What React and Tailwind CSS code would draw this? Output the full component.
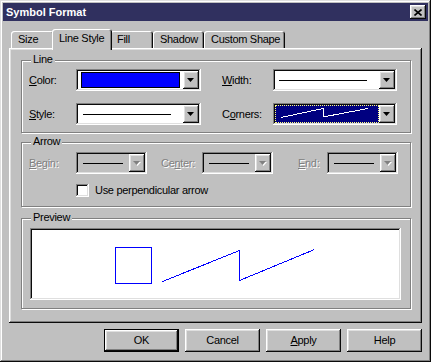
const raised =
  "shadow-[inset_-1px_-1px_#0a0a0a,inset_1px_1px_#ffffff,inset_-2px_-2px_#808080,inset_2px_2px_#dfdfdf]";
const sunken =
  "shadow-[inset_-1px_-1px_#ffffff,inset_1px_1px_#808080,inset_-2px_-2px_#dfdfdf,inset_2px_2px_#0a0a0a]";
const dim = "text-[#808080] [text-shadow:1px_1px_0_#ffffff]";

function DropButton({ disabled }) {
  return (
    <div className={`flex h-full w-[16px] shrink-0 items-center justify-center bg-[#c0c0c0] ${raised}`}>
      <svg width="8" height="5" viewBox="0 0 8 5">
        {disabled && <path d="M1 1h7L4.5 5z" fill="#ffffff" />}
        <path d="M0 0h7L3.5 4z" fill={disabled ? "#808080" : "#000000"} />
      </svg>
    </div>
  );
}

function Combo({ className, disabled, children }) {
  return (
    <div className={`flex h-[22px] shrink-0 p-[2px] ${disabled ? "bg-[#c0c0c0]" : "bg-white"} ${sunken} ${className}`}>
      <div className="flex min-w-0 flex-1 items-center">{children}</div>
      <DropButton disabled={disabled} />
    </div>
  );
}

function Group({ title, className, children }) {
  return (
    <div className={`relative border border-[#808080] shadow-[inset_1px_1px_#ffffff,1px_1px_#ffffff] ${className}`}>
      <span className="absolute -top-[8px] left-[9px] bg-[#c0c0c0] px-[2px] leading-[13px]">{title}</span>
      {children}
    </div>
  );
}

function Tab({ label, className, selected }) {
  if (selected) {
    return (
      <div className={`relative z-10 -mx-[2px] -mb-[2px] h-[21px] rounded-t-[3px] bg-[#c0c0c0] pl-[7px] pt-[3px] shadow-[inset_1px_1px_#ffffff,inset_-1px_0_#0a0a0a,inset_-2px_0_#808080] ${className}`}>
        {label}
      </div>
    );
  }
  return (
    <div className={`h-[17px] rounded-t-[3px] pl-[7px] pt-[2px] shadow-[inset_1px_1px_#ffffff,inset_-1px_0_#0a0a0a,inset_-2px_0_#808080] ${className}`}>
      {label}
    </div>
  );
}

function Button({ children, isDefault }) {
  return (
    <button type="button" className={`h-[23px] w-[75px] ${isDefault ? "border border-black" : ""}`}>
      <div className={`flex h-full w-full items-center justify-center bg-[#c0c0c0] ${raised}`}>{children}</div>
    </button>
  );
}

export default function App() {
  return (
    <div className={`h-[362px] w-[431px] bg-[#c0c0c0] p-[3px] font-['Liberation_Sans',Arial,sans-serif] text-[11px] leading-[13px] tracking-[-0.3px] text-black shadow-[inset_-1px_-1px_#0a0a0a,inset_1px_1px_#dfdfdf,inset_-2px_-2px_#808080,inset_2px_2px_#ffffff]`}>
      <div className="flex h-[18px] items-center justify-between bg-[#30305f] pl-[3px] pr-[2px]">
        <span className="text-[11px] font-bold tracking-normal text-white">Symbol Format</span>
        <div className={`flex h-[14px] w-[16px] items-center justify-center bg-[#c0c0c0] ${raised}`}>
          <svg width="8" height="7" viewBox="0 0 8 7">
            <path d="M0.5 0.5L7.5 6.5M7.5 0.5L0.5 6.5" stroke="#000000" strokeWidth="1.6" />
          </svg>
        </div>
      </div>

      <div className="ml-[6px] w-[413px]">
        <div className="mt-[8px] flex h-[19px] items-end pl-[2px]">
          <Tab label="Size" className="w-[43px]" />
          <Tab label="Line Style" className="w-[60px] pl-[5px]" selected />
          <Tab label="Fill" className="w-[43px]" />
          <Tab label="Shadow" className="w-[51px]" />
          <Tab label="Custom Shape" className="w-[81px] pl-[6px]" />
        </div>

        <div className={`h-[275px] pl-[12px] pr-[11px] pt-[12px] ${raised}`}>
          <Group title="Line" className="pb-[7px] pl-[7px] pt-[8px]">
            <div className="flex items-center">
              <span className="w-[47px]"><u>C</u>olor:</span>
              <Combo className="w-[125px]">
                <div className="mx-[3px] h-[16px] flex-1 border border-black bg-[#0000ff]" />
              </Combo>
              <span className="ml-[21px] w-[51px]"><u>W</u>idth:</span>
              <Combo className="w-[124px]">
                <div className="ml-[4px] mr-[12px] h-px flex-1 bg-black" />
              </Combo>
            </div>
            <div className="mt-[12px] flex items-center">
              <span className="w-[47px]"><u>S</u>tyle:</span>
              <Combo className="w-[125px]">
                <div className="ml-[5px] mr-[12px] h-px flex-1 bg-black" />
              </Combo>
              <span className="ml-[21px] w-[51px]">C<u>o</u>rners:</span>
              <Combo className="w-[124px]">
                <div className="h-full flex-1 border border-dotted border-[#ffff80] bg-[#000080]">
                  <svg width="102" height="16" viewBox="0 0 102 16" className="block" shapeRendering="crispEdges">
                    <polyline points="5,11.5 47,2.5 47,11 92,2.5" fill="none" stroke="#ffffff" strokeWidth="1" />
                  </svg>
                </div>
              </Combo>
            </div>
          </Group>

          <Group title="Arrow" className="mt-[9px] pb-[9px] pl-[7px] pt-[9px]">
            <div className="flex items-center">
              <span className={`w-[47px] ${dim}`}><u>B</u>egin:</span>
              <Combo className="w-[71px]" disabled>
                <div className="ml-[5px] mr-[6px] h-px flex-1 bg-black" />
              </Combo>
              <span className={`ml-[14px] w-[41px] ${dim}`}>Ce<u>n</u>ter:</span>
              <Combo className="w-[71px]" disabled>
                <div className="ml-[5px] mr-[6px] h-px flex-1 bg-black" />
              </Combo>
              <span className={`ml-[25px] w-[29px] ${dim}`}><u>E</u>nd:</span>
              <Combo className="w-[71px]" disabled>
                <div className="ml-[5px] mr-[6px] h-px flex-1 bg-black" />
              </Combo>
            </div>
            <div className="mt-[10px] flex h-[13px] items-center pl-[47px]">
              <div className={`h-[13px] w-[13px] bg-white ${sunken}`} />
              <span className="ml-[6px]">Use perpendicular arrow</span>
            </div>
          </Group>

          <Group title="Preview" className="mt-[11px] pb-[8px] pl-[8px] pt-[9px]">
            <div className={`h-[72px] w-[371px] bg-white p-[2px] ${sunken}`}>
              <svg width="367" height="68" viewBox="0 0 367 68" className="block" shapeRendering="crispEdges">
                <rect x="83.5" y="17.5" width="36" height="36" fill="none" stroke="#0000ff" strokeWidth="1" />
                <polyline points="130.5,51.5 207.5,20.5 207.5,50.5 282.5,19.5" fill="none" stroke="#0000ff" strokeWidth="1" />
              </svg>
            </div>
          </Group>
        </div>

        <div className="mt-[6px] flex justify-end gap-[6px]">
          <Button isDefault>OK</Button>
          <Button>Cancel</Button>
          <Button><span><u>A</u>pply</span></Button>
          <Button>Help</Button>
        </div>
      </div>
    </div>
  );
}
